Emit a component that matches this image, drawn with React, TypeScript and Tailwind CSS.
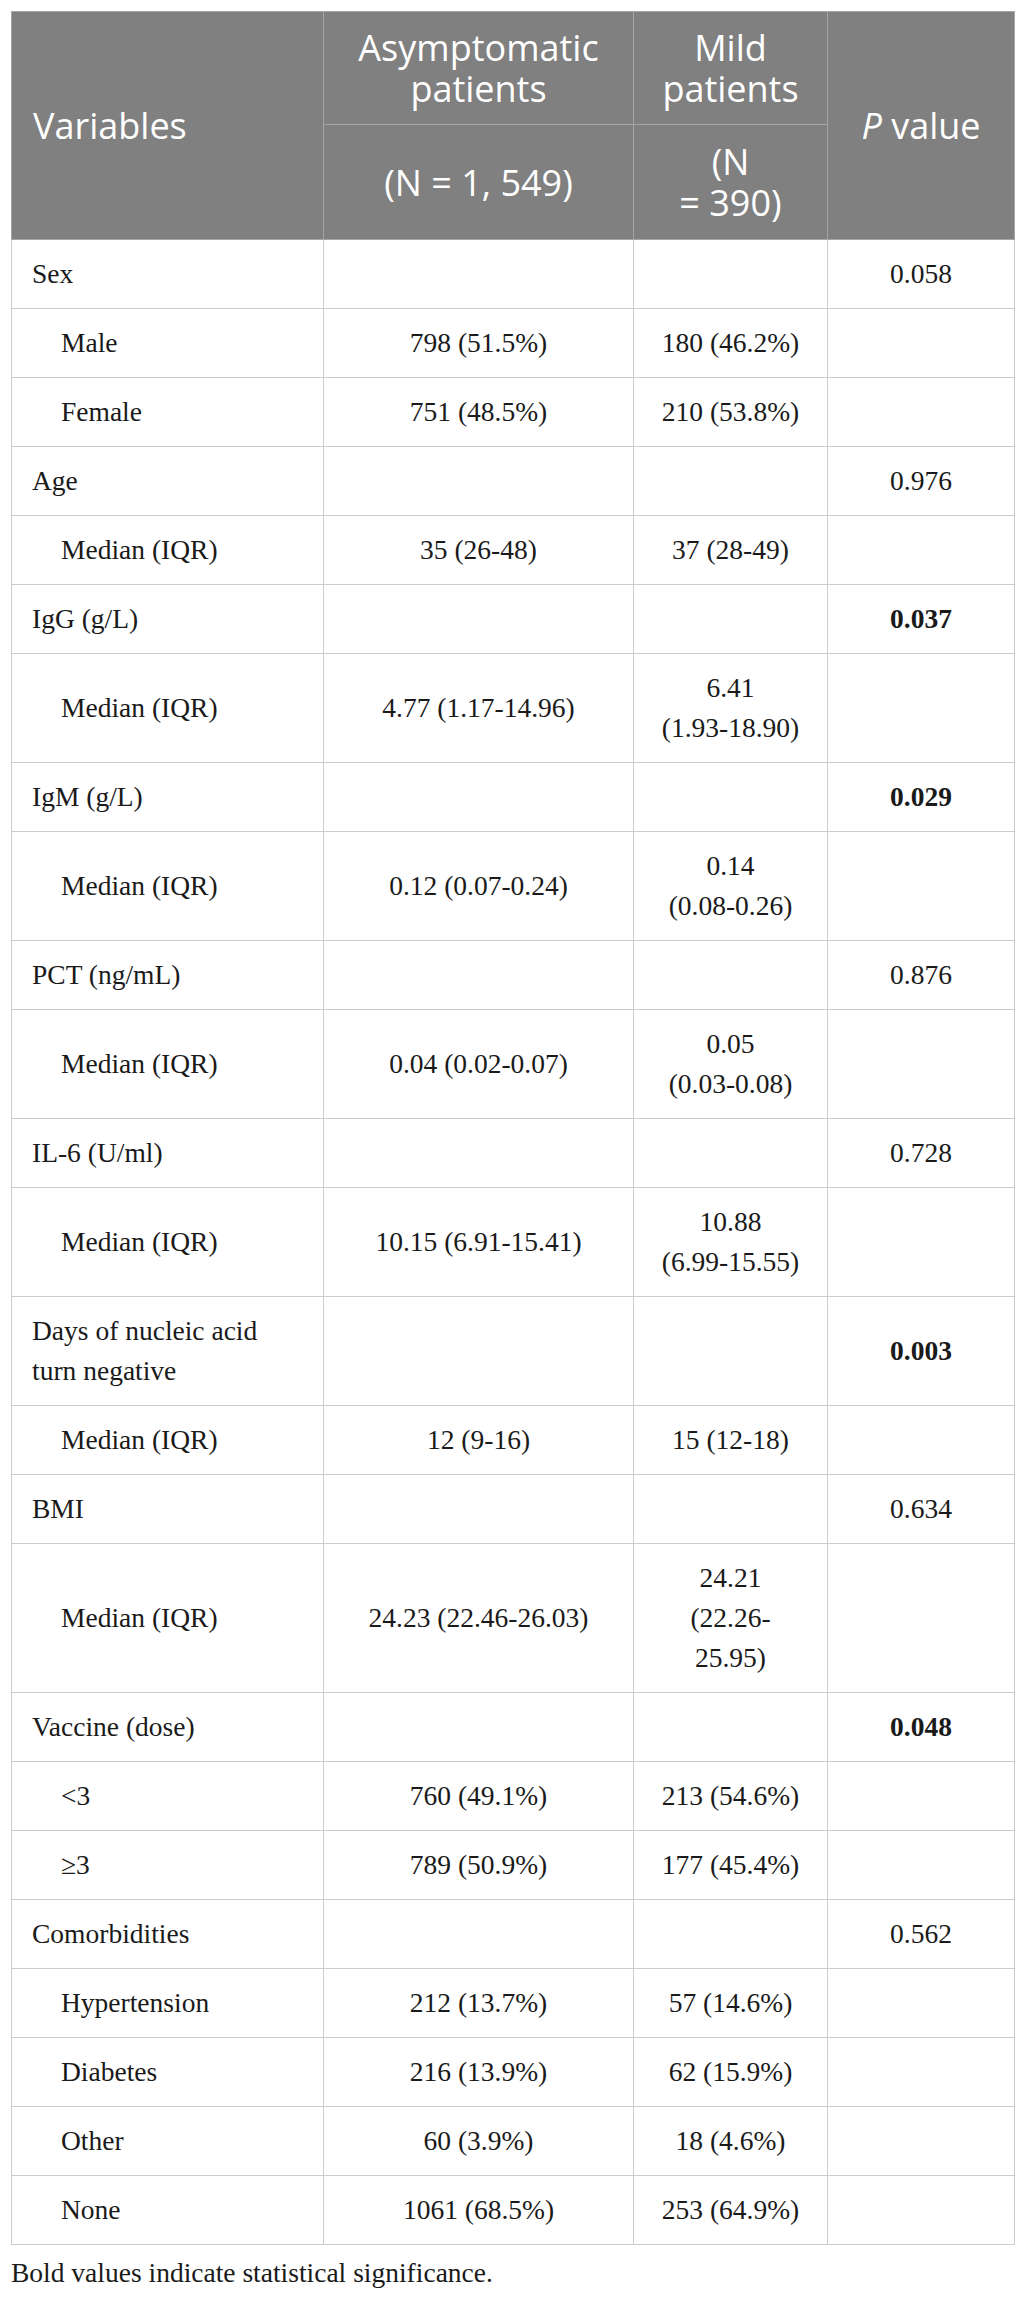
import React from "react";

type Row = {
  label: React.ReactNode;
  indent?: boolean;
  a?: React.ReactNode;
  m?: React.ReactNode;
  p?: string;
  bold?: boolean;
};

const rows: Row[] = [
  { label: "Sex", p: "0.058" },
  { label: "Male", indent: true, a: "798 (51.5%)", m: "180 (46.2%)" },
  { label: "Female", indent: true, a: "751 (48.5%)", m: "210 (53.8%)" },
  { label: "Age", p: "0.976" },
  { label: "Median (IQR)", indent: true, a: "35 (26-48)", m: "37 (28-49)" },
  { label: "IgG (g/L)", p: "0.037", bold: true },
  { label: "Median (IQR)", indent: true, a: "4.77 (1.17-14.96)", m: <>6.41<br />(1.93-18.90)</> },
  { label: "IgM (g/L)", p: "0.029", bold: true },
  { label: "Median (IQR)", indent: true, a: "0.12 (0.07-0.24)", m: <>0.14<br />(0.08-0.26)</> },
  { label: "PCT (ng/mL)", p: "0.876" },
  { label: "Median (IQR)", indent: true, a: "0.04 (0.02-0.07)", m: <>0.05<br />(0.03-0.08)</> },
  { label: "IL-6 (U/ml)", p: "0.728" },
  { label: "Median (IQR)", indent: true, a: "10.15 (6.91-15.41)", m: <>10.88<br />(6.99-15.55)</> },
  { label: <>Days of nucleic acid<br />turn negative</>, p: "0.003", bold: true },
  { label: "Median (IQR)", indent: true, a: "12 (9-16)", m: "15 (12-18)" },
  { label: "BMI", p: "0.634" },
  { label: "Median (IQR)", indent: true, a: "24.23 (22.46-26.03)", m: <>24.21<br />(22.26-<br />25.95)</> },
  { label: "Vaccine (dose)", p: "0.048", bold: true },
  { label: "<3", indent: true, a: "760 (49.1%)", m: "213 (54.6%)" },
  { label: "≥3", indent: true, a: "789 (50.9%)", m: "177 (45.4%)" },
  { label: "Comorbidities", p: "0.562" },
  { label: "Hypertension", indent: true, a: "212 (13.7%)", m: "57 (14.6%)" },
  { label: "Diabetes", indent: true, a: "216 (13.9%)", m: "62 (15.9%)" },
  { label: "Other", indent: true, a: "60 (3.9%)", m: "18 (4.6%)" },
  { label: "None", indent: true, a: "1061 (68.5%)", m: "253 (64.9%)" },
];

const serif = "font-['Minion_Pro','Liberation_Serif','Times_New_Roman',serif]";
const sans = "font-['Open_Sans','Noto_Sans',sans-serif]";

export default function App() {
  return (
    <div className="bg-white w-[1025px] min-h-[2299px] pt-[11px] px-[11px]">
      <table className="w-[1003px] border-collapse table-fixed">
        <colgroup>
          <col className="w-[312px]" />
          <col className="w-[310px]" />
          <col className="w-[194px]" />
          <col className="w-[187px]" />
        </colgroup>
        <thead className={`${sans} text-white text-[36px] leading-[41px] bg-[#808080]`}>
          <tr>
            <th rowSpan={2} className="border border-[#a6a6a6] text-left font-normal align-middle px-[21px]">
              Variables
            </th>
            <th className="border border-[#a6a6a6] text-center font-normal h-[113px] px-[10px] py-[15px]">
              Asymptomatic
              <br />
              patients
            </th>
            <th className="border border-[#a6a6a6] text-center font-normal h-[113px] px-[10px] py-[15px]">
              Mild
              <br />
              patients
            </th>
            <th rowSpan={2} className="border border-[#a6a6a6] text-center font-normal align-middle px-[10px]">
              <span className="italic">P</span> value
            </th>
          </tr>
          <tr>
            <th className="border border-[#a6a6a6] text-center font-normal h-[115px] px-[10px] whitespace-nowrap">
              (N = 1, 549)
            </th>
            <th className="border border-[#a6a6a6] text-center font-normal h-[115px] px-[10px] whitespace-nowrap">
              (N
              <br />= 390)
            </th>
          </tr>
        </thead>
        <tbody className={`${serif} text-[#1a1a1a] text-[27.5px] leading-[40px]`}>
          {rows.map((r, i) => (
            <tr key={i}>
              <td
                className={`border border-[#cccccc] pt-[14px] pb-[14px] whitespace-nowrap align-middle ${
                  r.indent ? "pl-[49px]" : "pl-[20px]"
                } pr-[10px]`}
              >
                {r.label}
              </td>
              <td className="border border-[#cccccc] py-[14px] text-center whitespace-nowrap align-middle">
                {r.a}
              </td>
              <td className="border border-[#cccccc] py-[14px] text-center whitespace-nowrap align-middle">
                {r.m}
              </td>
              <td
                className={`border border-[#cccccc] py-[14px] text-center whitespace-nowrap align-middle ${
                  r.bold ? "font-bold" : ""
                }`}
              >
                {r.p}
              </td>
            </tr>
          ))}
        </tbody>
      </table>
      <p className={`${serif} text-[#1a1a1a] text-[27.5px] leading-[33px] pt-[11px]`}>
        Bold values indicate statistical significance.
      </p>
    </div>
  );
}
